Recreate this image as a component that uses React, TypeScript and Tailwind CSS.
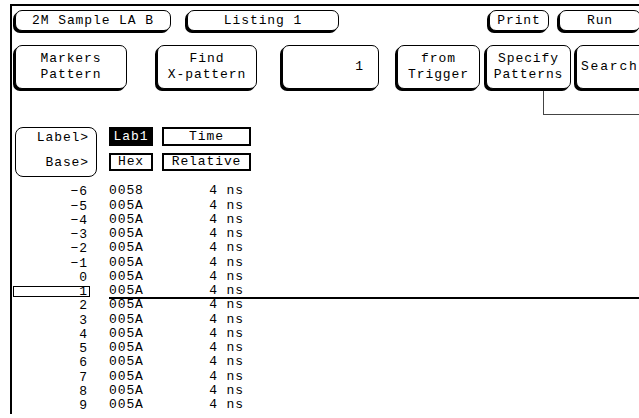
import React from 'react';

const btn =
  'shrink-0 bg-white border border-black rounded-[7px] shadow-[-2px_2px_0_0_#000] flex flex-col items-center justify-center leading-[16px]';

const rows = [-6, -5, -4, -3, -2, -1, 0, 1, 2, 3, 4, 5, 6, 7, 8, 9];

const App: React.FC = () => {
  return (
    <div className="w-[639px] h-[418px] bg-white overflow-hidden text-black text-[13px] tracking-[0.9px] font-['Liberation_Mono',monospace]">
      <div className="ml-[10px] mt-[4px] h-[410px] w-[700px] border-t-2 border-l-2 border-black">
        {/* top row */}
        <div className="flex pt-[4px] h-[21px] box-content">
          <div className={`${btn} ml-[3px] w-[156px] h-[21px]`}>2M Sample LA B</div>
          <div className={`${btn} ml-[16px] w-[152px] h-[21px]`}>Listing 1</div>
          <div className={`${btn} ml-[150px] w-[60px] h-[21px]`}>Print</div>
          <div className={`${btn} ml-[10px] w-[82px] h-[21px]`}>Run</div>
        </div>

        {/* second row */}
        <div className="flex mt-[14px] h-[44px]">
          <div className={`${btn} ml-[3px] w-[112px]`}>
            <span>Markers</span>
            <span>Pattern</span>
          </div>
          <div className={`${btn} ml-[30px] w-[100px]`}>
            <span>Find</span>
            <span>X-pattern</span>
          </div>
          <div className={`${btn} ml-[25px] w-[97px] !items-end pr-[14px]`}>1</div>
          <div className={`${btn} ml-[18px] w-[83px]`}>
            <span>from</span>
            <span>Trigger</span>
          </div>
          <div className={`${btn} ml-[6px] w-[85px]`}>
            <span>Specify</span>
            <span>Patterns</span>
          </div>
          <div className={`${btn} ml-[5px] w-[70px] !items-start pl-[4px] tracking-[1.8px]`}>Search</div>
        </div>

        {/* connector */}
        <div className="ml-[531px] h-[26px] border-l border-b border-[#444]" />

        {/* headers */}
        <div className="flex items-start mt-[12px]">
          <div className="ml-[3px] w-[82px] h-[50px] rounded-[8px] border border-black pt-[3px] pr-[7px] text-right leading-[14px]">
            <div>Label&gt;</div>
            <div className="mt-[11px]">Base&gt;</div>
          </div>
          <div className="ml-[12px] w-[44px] flex flex-col">
            <div className="h-[19px] bg-black text-white flex items-center justify-center">Lab1</div>
            <div className="mt-[7px] h-[18px] border-2 border-black flex items-center justify-center">Hex</div>
          </div>
          <div className="ml-[9px] w-[89px] flex flex-col">
            <div className="h-[19px] border-2 border-black flex items-center justify-center">Time</div>
            <div className="mt-[7px] h-[18px] border-2 border-black flex items-center justify-center">Relative</div>
          </div>
        </div>

        {/* listing */}
        <div className="mt-[8px]">
          {rows.map((n) => {
            const sel = n === 1;
            return (
              <div key={n} className="flex items-center h-[14.25px]">
                <div
                  className={`ml-[1px] w-[77px] h-[11px] flex items-center justify-end pr-[1px] border ${
                    sel ? 'border-black' : 'border-transparent'
                  }`}
                >
                  {n < 0 ? `\u2212${-n}` : n}
                </div>
                <div
                  className={`ml-[19px] flex-1 self-stretch flex items-center border-b-2 ${
                    sel ? 'border-black' : 'border-transparent'
                  }`}
                >
                  <span className="w-[60px]">{n === -6 ? '0058' : '005A'}</span>
                  <span className="w-[75px] text-right">4 ns</span>
                </div>
              </div>
            );
          })}
        </div>
      </div>
    </div>
  );
};

export default App;
